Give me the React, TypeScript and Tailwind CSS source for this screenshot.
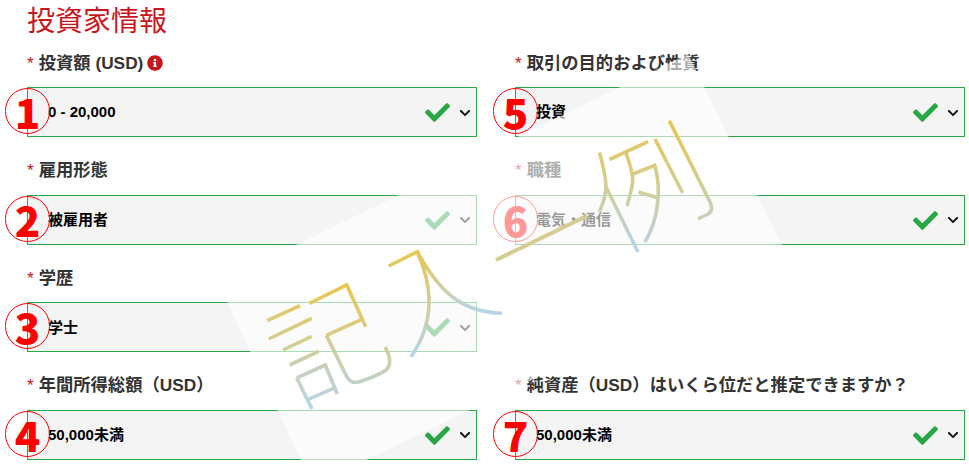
import { FaCheck, FaChevronDown, FaInfoCircle } from 'react-icons/fa';

interface FieldProps {
  label: string;
  value: string;
  num: string;
  info?: boolean;
}

function Field({ label, value, num, info }: FieldProps) {
  return (
    <div className="flex h-[87px] flex-col">
      <div className="mb-[13px] flex h-6 items-center pt-[1px] text-[17.3px] font-bold leading-6 text-[#333]">
        <span className="mr-[5px] font-normal text-[#c8161d]">*</span>
        {label}
        {info && <FaInfoCircle className="ml-[4px] text-[#c8161d]" size={16} />}
      </div>
      <div className="relative flex h-[50px] items-center border border-[#28a745] bg-[#f4f4f4] pl-[20px] pt-[1px] text-[15px] font-bold text-black">
        <span>{value}</span>
        <FaCheck className="ml-auto text-[#28a745]" size={25} />
        <FaChevronDown className="ml-[9px] mr-[5px] text-[#111]" size={12} />
        <div className="absolute left-[-23px] top-[0px] flex h-[46px] w-[45px] items-center justify-center rounded-full border-[1.5px] border-[#ff0000] font-['Noto_Sans_CJK_JP',sans-serif] text-[42px] font-black leading-none text-[#ff0000]">
          {num}
        </div>
      </div>
    </div>
  );
}

function Watermark() {
  return (
    <svg
      className="pointer-events-none absolute left-0 top-0"
      width="969"
      height="473"
      viewBox="0 0 969 473"
      fill="none"
    >
      <defs>
        <linearGradient id="ki" gradientUnits="userSpaceOnUse" x1="0" y1="285" x2="0" y2="410">
          <stop offset="0" stopColor="#e8c650" />
          <stop offset="0.4" stopColor="#d8cc88" />
          <stop offset="1" stopColor="#b2d6ee" />
        </linearGradient>
        <linearGradient id="nyu" gradientUnits="userSpaceOnUse" x1="0" y1="250" x2="0" y2="358">
          <stop offset="0" stopColor="#e8c650" />
          <stop offset="0.45" stopColor="#d6cd8c" />
          <stop offset="1" stopColor="#b2d6ee" />
        </linearGradient>
        <linearGradient id="nyu2" gradientUnits="userSpaceOnUse" x1="0" y1="250" x2="0" y2="314">
          <stop offset="0" stopColor="#e8c650" />
          <stop offset="0.45" stopColor="#d6cd8c" />
          <stop offset="1" stopColor="#b2d6ee" />
        </linearGradient>
        <linearGradient id="rei" gradientUnits="userSpaceOnUse" x1="0" y1="120" x2="0" y2="254">
          <stop offset="0" stopColor="#e8c650" />
          <stop offset="0.45" stopColor="#d6cd8c" />
          <stop offset="1" stopColor="#b2d6ee" />
        </linearGradient>
      </defs>
      <polygon points="218,283 688,54 787,256 313,486" fill="#fff" fillOpacity="0.6" />
      <g stroke="url(#ki)" strokeWidth="3.6">
        <path d="M267.3 320.7L300 305.7" />
        <path d="M268.7 339L311.7 318.3" />
        <path d="M283 350L311.7 336.3" />
        <path d="M289.7 365L318.7 351.3" />
        <path d="M296.7 378L325.3 365L337.3 394M296.7 378L312 409M308.3 399.3L333.3 388.3" />
        <path d="M309.3 303.3L346.7 285L365.7 326.7" />
        <path d="M326.3 335.3L361.7 319.3M326.3 335.3L345 373.3C349 382 353 384 362 381C372 377.5 382 373 386 370C391 366 391 357 385 347" />
      </g>
      <path d="M388.7 266L417.3 251.7C432 285 436 320 411 356.7" stroke="url(#nyu)" strokeWidth="3.6" />
      <path d="M417.3 251.7C440 293 462 312 502 313.3" stroke="url(#nyu2)" strokeWidth="3.6" />
      <path d="M496 260L587.3 215.7" stroke="#d4cc92" strokeWidth="4" />
      <g stroke="url(#rei)" strokeWidth="3.6">
        <path d="M599.5 152.5C603 165 606 178 606 187C606 197 602 205 599.5 212" />
        <path d="M606 187L638 252" />
        <path d="M609.5 159.5L648 141.7" />
        <path d="M626 153C630 165 633 172 632.7 181C632 190 629 198 627 206" />
        <path d="M632.7 174L654.7 165.5C662 190 658 220 645 242" />
        <path d="M638.5 192L656.5 197.5" />
        <path d="M655 139L682.7 193" />
        <path d="M669.3 120.7L710 202C713 209 712 211 708 214L698 219" />
      </g>
    </svg>
  );
}

export default function App() {
  return (
    <div className="relative h-[473px] w-[969px] overflow-hidden bg-white font-['Liberation_Sans','Noto_Sans_CJK_JP',sans-serif]">
      <div className="pl-[27px]">
        <h2 className="h-[50px] pt-[1px] text-[28px] font-normal leading-[42px] text-[#c8161d]">投資家情報</h2>
        <div className="grid w-[938px] grid-cols-[450px_450px] gap-x-[38px] gap-y-[20.67px]">
          <Field label="投資額 (USD)" value="0 - 20,000" num="1" info />
          <Field label="取引の目的および性質" value="投資" num="5" />
          <Field label="雇用形態" value="被雇用者" num="2" />
          <Field label="職種" value="電気・通信" num="6" />
          <Field label="学歴" value="学士" num="3" />
          <div />
          <Field label="年間所得総額（USD）" value="50,000未満" num="4" />
          <Field label="純資産（USD）はいくら位だと推定できますか？" value="50,000未満" num="7" />
        </div>
      </div>
      <Watermark />
    </div>
  );
}
